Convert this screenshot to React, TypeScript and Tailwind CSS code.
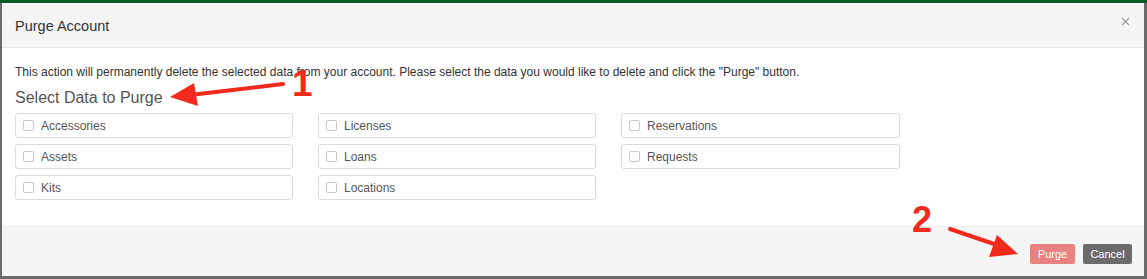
import React from 'react';

const items = [
  'Accessories', 'Licenses', 'Reservations',
  'Assets', 'Loans', 'Requests',
  'Kits', 'Locations',
];

const CheckRow: React.FC<{ label: string }> = ({ label }) => (
  <label className="flex items-center h-[25px] border border-[#dcdcdc] rounded-[3px] px-[7px] bg-white">
    <span className="w-[11px] h-[11px] border border-[#c8c8c8] rounded-[2px] bg-white shrink-0" />
    <span className="ml-[7px] text-[12px] text-[#555]">{label}</span>
  </label>
);

const Annotations: React.FC = () => (
  <div className="absolute inset-0 pointer-events-none">
    <svg className="absolute inset-0" width="1147" height="279" viewBox="0 0 1147 279">
      {/* arrow 1 */}
      <line x1="283" y1="84" x2="190" y2="95" stroke="#f22a1d" strokeWidth="4" strokeLinecap="round" />
      <polygon points="170,97 194,83 198,106" fill="#f22a1d" />
      {/* arrow 2 */}
      <line x1="950" y1="229" x2="1000" y2="246" stroke="#f22a1d" strokeWidth="4" strokeLinecap="round" />
      <polygon points="1018,254 997,235 989,257" fill="#f22a1d" />
    </svg>
    <span className="absolute left-[292px] top-[65px] text-[37px] font-bold leading-none text-[#f22a1d]">1</span>
    <span className="absolute left-[912px] top-[202px] text-[36px] font-bold leading-none text-[#f22a1d]">2</span>
  </div>
);

export default function App() {
  return (
    <div
      className="relative w-[1147px] h-[279px] bg-[#6a6a6a] overflow-hidden"
      style={{ fontFamily: '"Liberation Sans", Arial, sans-serif' }}
    >
      <div className="h-[3px] bg-[#0b5a22]" />
      <div className="ml-[2px] w-[1142px] h-[273px] flex flex-col bg-white">
        <header className="h-[45px] flex items-start justify-between pl-[13px] pr-[14px] bg-[#f5f5f5] border-b border-[#e8e8e8]">
          <h4 className="mt-[14px] text-[14.5px] leading-[18px] text-[#333]">Purge Account</h4>
          <button className="mt-[14px] text-[#9a9a9a]">
            <svg width="9" height="9" viewBox="0 0 9 9" stroke="currentColor" strokeWidth="1.1">
              <path d="M1 1l7 7M8 1L1 8" />
            </svg>
          </button>
        </header>

        <div className="flex-1 px-[13px] pt-[16px]">
          <p className="text-[12px] leading-[17px] text-[#333]">
            This action will permanently delete the selected data from your account. Please select the data you would like to delete and click the "Purge" button.
          </p>
          <h3 className="mt-[7px] text-[16px] leading-[20px] text-[#555]">Select Data to Purge</h3>
          <div className="mt-[5px] grid grid-cols-[278px_278px_279px] gap-x-[25px] gap-y-[6px]">
            {items.map((it) => (
              <CheckRow key={it} label={it} />
            ))}
          </div>
        </div>

        <footer className="h-[50px] flex items-start justify-end gap-[8px] pr-[12px] pt-[17px] bg-[#f5f5f5] border-t border-[#ececec]">
          <button className="w-[45px] h-[20px] rounded-[2px] bg-[#e88280] text-white text-[11px]">Purge</button>
          <button className="w-[49px] h-[20px] rounded-[2px] bg-[#6b6b6b] text-white text-[11px]">Cancel</button>
        </footer>
      </div>
      <Annotations />
    </div>
  );
}
